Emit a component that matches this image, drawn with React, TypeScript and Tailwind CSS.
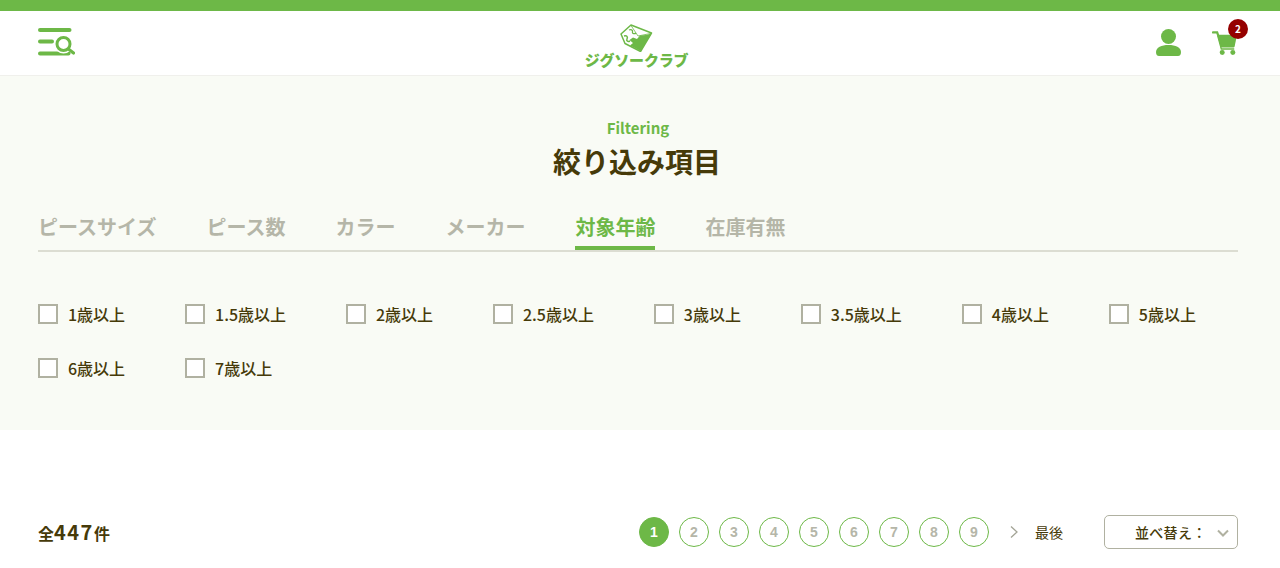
const jp = "font-['Noto_Sans_CJK_JP','Noto_Sans',sans-serif]";

const tabs = ["ピースサイズ", "ピース数", "カラー", "メーカー", "対象年齢", "在庫有無"];
const ages = ["1歳以上", "1.5歳以上", "2歳以上", "2.5歳以上", "3歳以上", "3.5歳以上", "4歳以上", "5歳以上", "6歳以上", "7歳以上"];
const pages = [1, 2, 3, 4, 5, 6, 7, 8, 9];

function MenuSearchIcon() {
  return (
    <svg width="37" height="30" viewBox="0 0 37 30" fill="none" strokeLinecap="round">
      <path d="M2 3H31.5" stroke="#6db847" strokeWidth="4" />
      <path d="M2 14.5H14" stroke="#6db847" strokeWidth="4" />
      <path d="M2 26.5H30.5" stroke="#6db847" strokeWidth="4" />
      <circle cx="25.5" cy="17" r="9.5" fill="#fff" />
      <circle cx="25.5" cy="17" r="6.5" stroke="#6db847" strokeWidth="3" />
      <path d="M31 22.5L35.5 26" stroke="#6db847" strokeWidth="3.2" />
    </svg>
  );
}

function Logo() {
  return (
    <div className="flex flex-col items-center pt-[6px]">
      <svg width="33" height="28" viewBox="0 0 33 28">
        <path d="M11 1L31.5 9L20.5 27.5L5 19.5L1 10Z" fill="#fff" stroke="#6db847" strokeWidth="1.5" strokeLinejoin="round" />
        <path d="M11 1.5L18 12L30.5 9.5" fill="none" stroke="#6db847" strokeWidth="0.8" />
        <path d="M31.5 9.5L20.5 27L10 21.5L13 19L9.5 16L13 13.5L17 15L20 11.5L26 11Z" fill="#6db847" />
        <path d="M4 12C7 11 8 13 7 15C6 17 8 18 10 17" fill="none" stroke="#6db847" strokeWidth="1.5" />
        <path d="M9 6C11 5 13 6 12.5 8C12 10 15 10 16 9" fill="none" stroke="#6db847" strokeWidth="1.3" />
      </svg>
      <span className={`${jp} mt-[-1px] text-[15px] leading-[17px] font-black tracking-[-0.2px] text-[#6db847]`}>ジグソークラブ</span>
    </div>
  );
}

function UserIcon() {
  return (
    <svg width="25" height="27" viewBox="0 0 25 27" fill="#6db847">
      <circle cx="12.5" cy="7.5" r="7.5" />
      <path d="M0 23C0 18.5 5.5 16 12.5 16S25 18.5 25 23C25 25.5 24 27 22 27H3C1 27 0 25.5 0 23Z" />
    </svg>
  );
}

function CartIcon() {
  return (
    <svg width="26" height="24" viewBox="0 0 28 26" fill="#6db847">
      <path d="M1 1.5H5.5L6.5 4.5" fill="none" stroke="#6db847" strokeWidth="2.4" strokeLinecap="round" />
      <path d="M5.5 4H27L24.5 16.5C24.3 17.5 23.7 18 22.8 18H9.5L5.5 4Z" />
      <path d="M6 5L10 19.5H24" fill="none" stroke="#6db847" strokeWidth="1.4" />
      <circle cx="11" cy="23.3" r="2.7" />
      <circle cx="22.5" cy="23.3" r="2.7" />
    </svg>
  );
}

export default function App() {
  return (
    <div className={`${jp} h-[568px] overflow-hidden bg-white`}>
      <div className="h-[11px] bg-[#6db847]" />
      <header className="flex h-[65px] items-center justify-between border-b border-[#f0f0ec] pr-[42px] pl-[38px]">
        <div className="w-[200px] pb-[2px]"><MenuSearchIcon /></div>
        <div className="ml-[-3px]"><Logo /></div>
        <div className="flex w-[200px] items-center justify-end gap-[31px] pb-[1px]">
          <UserIcon />
          <div className="relative">
            <CartIcon />
            <span className="absolute top-[-12px] left-[16px] flex h-[20px] w-[20px] items-center justify-center rounded-full bg-[#950000] text-[10px] font-bold text-white">2</span>
          </div>
        </div>
      </header>

      <section className="h-[354px] bg-[#f9fbf5] pt-[41px] pr-[42px] pl-[38px]">
        <p className="text-center text-[15px] leading-[22px] font-bold text-[#6db847]">Filtering</p>
        <h2 className="mt-[2px] pr-[2px] text-center text-[28px] leading-[40px] font-bold text-[#463a09]">絞り込み項目</h2>
        <div className="mt-[32px] flex gap-[50px] border-b-2 border-[#dcddd2]">
          {tabs.map((t) => (
            <span key={t} className={`h-[37px] text-[20px] leading-[28px] font-bold ${t === "対象年齢" ? "border-b-[4px] border-[#6db847] text-[#6db847]" : "text-[#b5b6a8]"}`}>{t}</span>
          ))}
        </div>
        <div className="mt-[52px] flex flex-wrap gap-x-[59.9px] gap-y-[34px]">
          {ages.map((a) => (
            <label key={a} className="flex h-[20px] items-center gap-[10px]">
              <span className="h-[20px] w-[20px] border-2 border-[#b0b1a1] bg-white" />
              <span className="text-[16px] leading-[20px] font-medium text-[#463a09]">{a}</span>
            </label>
          ))}
        </div>
      </section>

      <div className="flex items-center justify-between pt-[85px] pr-[42px] pl-[38px]">
        <p className="flex items-baseline text-[16px] font-bold text-[#463a09]">
          全<span className="text-[20px] tracking-[1.5px]">447</span>件
        </p>
        <div className="flex items-center">
          <div className="flex gap-[10px]">
            {pages.map((p) => (
              <span key={p} className={`flex h-[30px] w-[30px] items-center justify-center rounded-full border border-[#6db847] font-['Liberation_Sans',sans-serif] text-[14px] font-bold ${p === 1 ? "bg-[#6db847] text-white" : "text-[#b5b6a8]"}`}>{p}</span>
            ))}
          </div>
          <svg className="ml-[20px]" width="10" height="14" viewBox="0 0 10 14" fill="none" stroke="#a3a496" strokeWidth="1.3">
            <path d="M2 1.5L8 7L2 12.5" />
          </svg>
          <span className="ml-[16px] text-[14px] text-[#463a09]">最後</span>
          <div className="relative ml-[41px] flex h-[34px] w-[134px] items-center rounded-[5px] border border-[#b0b1a1] bg-white pl-[30px] text-[14px] font-medium tracking-[0.3px] text-[#463a09]">
            並べ替え：
            <svg className="absolute top-[13px] right-[8px]" width="12" height="9" viewBox="0 0 12 9" fill="none" stroke="#b0b1a1" strokeWidth="2">
              <path d="M1 1.5L6 6.5L11 1.5" />
            </svg>
          </div>
        </div>
      </div>
    </div>
  );
}
